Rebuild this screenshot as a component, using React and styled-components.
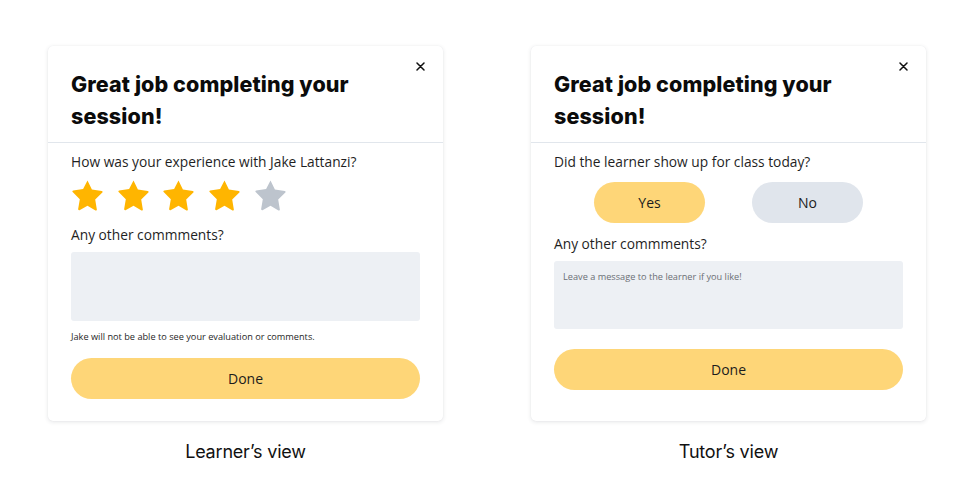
import React, { useState } from "react";
import styled, { createGlobalStyle } from "styled-components";

const GlobalStyle = createGlobalStyle`
  html, body {
    margin: 0;
    padding: 0;
    background: #ffffff;
  }
  body {
    font-family: "Open Sans", "Liberation Sans", sans-serif;
    color: #1c1c1c;
  }
`;

const Page = styled.div`
  width: 975px;
  height: 501px;
  display: flex;
  justify-content: space-between;
  padding: 46px 49px 0 48px;
  box-sizing: border-box;
`;

const Column = styled.div`
  width: 395px;
  display: flex;
  flex-direction: column;
  align-items: center;
`;

const Card = styled.div`
  position: relative;
  width: 395px;
  height: 375px;
  box-sizing: border-box;
  background: #fff;
  border-radius: 5px;
  box-shadow: 0 1px 4px rgba(30, 41, 59, 0.12), 0 0 1px rgba(30, 41, 59, 0.08);
  display: flex;
  flex-direction: column;
`;

const Header = styled.div`
  padding: 22px 23px 10px;
  border-bottom: 1px solid #e1e6ec;
`;

const Title = styled.h1`
  margin: 0;
  font-family: "Inter", "DejaVu Sans", sans-serif;
  font-weight: 800;
  font-size: 21.5px;
  line-height: 32px;
  letter-spacing: 0.1px;
  color: #0b0b0b;
`;

const Close = styled.button`
  position: absolute;
  top: 12px;
  right: 15px;
  width: 16px;
  height: 16px;
  padding: 0;
  border: none;
  background: none;
  display: flex;
  align-items: center;
  justify-content: center;
  cursor: pointer;
`;

const Body = styled.div`
  padding: 9px 23px 0;
  display: flex;
  flex-direction: column;
`;

const Question = styled.p`
  margin: 0;
  font-size: 13.75px;
  line-height: 20px;
  color: #1f1f1f;
`;

const Stars = styled.div`
  display: flex;
  gap: 12.7px;
  margin: 7px 0 9px;
`;

const Choices = styled.div`
  display: flex;
  justify-content: center;
  gap: 47px;
  margin: 10px 0 11px;
`;

const Pill = styled.button`
  width: ${(p) => p.$width || "100%"};
  height: 41px;
  border: none;
  border-radius: 21px;
  background: ${(p) => (p.$active ? "#fed678" : "#e0e5ec")};
  font-family: "Open Sans", "Liberation Sans", sans-serif;
  font-size: 14px;
  color: #1c1c1c;
  cursor: pointer;
  margin-top: ${(p) => p.$mt || "0"};
`;

const CommentBox = styled.textarea`
  display: block;
  width: 100%;
  height: ${(p) => p.$h || "69px"};
  box-sizing: border-box;
  margin-top: 7px;
  border: none;
  border-radius: 3px;
  background: #edf0f4;
  resize: none;
  padding: 9px 9px;
  font-family: "Open Sans", "Liberation Sans", sans-serif;
  font-size: 9.2px;
  color: #333;
  outline: none;
  &::placeholder {
    color: #6b6f75;
  }
`;

const Note = styled.p`
  margin: 9px 0 14px;
  font-size: 9.2px;
  line-height: 14px;
  color: #1f1f1f;
`;

const Caption = styled.div`
  margin-top: 20px;
  font-family: "Inter", "Liberation Sans", sans-serif;
  font-size: 18px;
  color: #111;
  letter-spacing: -0.2px;
`;

function Star({ filled }) {
  return (
    <svg width="33" height="32" viewBox="0 0 24 23">
      <path
        d="M12 0.9l3.2 6.6 7.2 1c0.6 0.1 0.8 0.8 0.4 1.2l-5.2 5.1 1.2 7.2c0.1 0.6-0.5 1-1 0.8L12 19.4l-5.8 3.1c-0.5 0.3-1.1-0.2-1-0.8l1.2-7.2-5.2-5.1c-0.4-0.4-0.2-1.1 0.4-1.2l7.2-1z"
        fill={filled ? "#ffb500" : "#bdc4cd"}
      />
    </svg>
  );
}

function CloseIcon() {
  return (
    <svg width="9" height="9" viewBox="0 0 9 9">
      <path d="M1 1L8 8M8 1L1 8" stroke="#111" strokeWidth="1.5" strokeLinecap="round" />
    </svg>
  );
}

function LearnerCard() {
  const [rating, setRating] = useState(4);
  return (
    <Card>
      <Close aria-label="close"><CloseIcon /></Close>
      <Header>
        <Title>Great job completing your session!</Title>
      </Header>
      <Body>
        <Question>How was your experience with Jake Lattanzi?</Question>
        <Stars>
          {[1, 2, 3, 4, 5].map((n) => (
            <span key={n} onClick={() => setRating(n)}>
              <Star filled={n <= rating} />
            </span>
          ))}
        </Stars>
        <Question>Any other commments?</Question>
        <CommentBox />
        <Note>Jake will not be able to see your evaluation or comments.</Note>
        <Pill $active>Done</Pill>
      </Body>
    </Card>
  );
}

function TutorCard() {
  const [showed, setShowed] = useState(true);
  return (
    <Card>
      <Close aria-label="close"><CloseIcon /></Close>
      <Header>
        <Title>Great job completing your session!</Title>
      </Header>
      <Body>
        <Question>Did the learner show up for class today?</Question>
        <Choices>
          <Pill $width="111px" $active={showed} onClick={() => setShowed(true)}>Yes</Pill>
          <Pill $width="111px" $active={!showed} onClick={() => setShowed(false)}>No</Pill>
        </Choices>
        <Question>Any other commments?</Question>
        <CommentBox $h="68px" placeholder="Leave a message to the learner if you like!" />
        <Pill $active $mt="20px">Done</Pill>
      </Body>
    </Card>
  );
}

export default function App() {
  return (
    <>
      <GlobalStyle />
      <Page>
        <Column>
          <LearnerCard />
          <Caption>Learner’s view</Caption>
        </Column>
        <Column>
          <TutorCard />
          <Caption>Tutor’s view</Caption>
        </Column>
      </Page>
    </>
  );
}
